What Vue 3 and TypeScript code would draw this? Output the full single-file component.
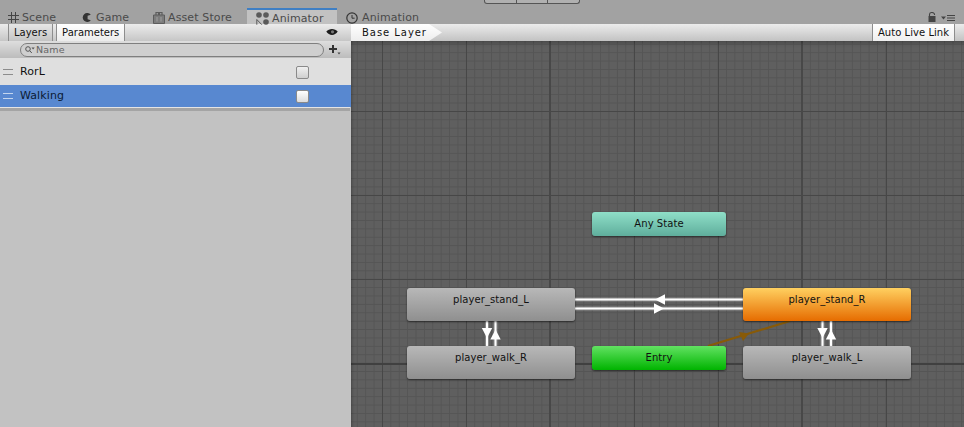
<script setup lang="ts">
interface GraphNode { label: string; x: number; y: number; w: number; h: number; kind: string }
const nodes: GraphNode[] = [
  { label: 'Any State', x: 241, y: 171, w: 134, h: 24, kind: 'teal' },
  { label: 'player_stand_L', x: 56, y: 247, w: 168, h: 33, kind: 'gray' },
  { label: 'player_stand_R', x: 392, y: 247, w: 168, h: 33, kind: 'orange' },
  { label: 'player_walk_R', x: 56, y: 305, w: 168, h: 33, kind: 'gray' },
  { label: 'Entry', x: 241, y: 305, w: 134, h: 24, kind: 'green' },
  { label: 'player_walk_L', x: 392, y: 305, w: 168, h: 33, kind: 'gray' },
]
const params = [
  { name: 'RorL', selected: false },
  { name: 'Walking', selected: true },
]
function nodeStyle(n: GraphNode) {
  return { left: n.x + 'px', top: n.y + 'px', width: n.w + 'px', height: n.h + 'px' }
}
</script>

<template>
  <div class="app">
    <div class="topstrip">
      <div class="playgroup"><span></span><span></span><span></span></div>
    </div>
    <div class="tabs">
      <div class="tab t-scene">
        <svg width="11" height="11" viewBox="0 0 11 11"><path d="M3.5 0v11M7.5 0v11M0 3.5h11M0 7.5h11" stroke="#444" stroke-width="1" fill="none"/></svg>
        <span>Scene</span>
      </div>
      <div class="tab t-game">
        <svg width="9" height="9" viewBox="0 0 9 9"><path d="M8.8 1.8A4.5 4.5 0 1 0 8.8 7.2L5.6 6.2V2.8Z" fill="#333"/></svg>
        <span>Game</span>
      </div>
      <div class="tab t-store">
        <svg width="12" height="13" viewBox="0 0 12 13"><path d="M0.5 4h11v8.5h-11Z" fill="#7c7c7c" stroke="#5c5c5c"/><path d="M3 4V1.5h2.5V4M6.5 4V1.5H9V4" fill="none" stroke="#5c5c5c" stroke-width="1.2"/><path d="M4 6v4.5M8 6v4.5" stroke="#a0a0a0"/></svg>
        <span>Asset Store</span>
      </div>
      <div class="tab active">
        <svg width="13" height="13" viewBox="0 0 13 13"><circle cx="3" cy="3" r="2.8" fill="#5a5a5a"/><circle cx="10" cy="3" r="2.8" fill="#5a5a5a"/><circle cx="10" cy="10" r="2.8" fill="#5a5a5a"/><path d="M0.8 7.5v5.2M0.8 7.5l5 5.2" stroke="#5a5a5a" fill="none"/></svg>
        <span>Animator</span>
      </div>
      <div class="tab t-anim">
        <svg width="12" height="12" viewBox="0 0 12 12"><circle cx="6" cy="6" r="5.2" fill="none" stroke="#333" stroke-width="1.2"/><path d="M6 3v3.2h2.6" fill="none" stroke="#333"/></svg>
        <span>Animation</span>
      </div>
      <div class="tab-tools">
        <svg width="8" height="10" viewBox="0 0 8 10"><path d="M0.5 4h7V10h-7Z" fill="#444"/><path d="M1.5 4V2.5a2.5 2 0 0 1 5 0V3" fill="none" stroke="#444" stroke-width="1.1"/></svg>
        <svg class="menu" width="14" height="6" viewBox="0 0 14 6"><path d="M0 1.5h5L2.5 4.5Z" fill="#444"/><path d="M6 .5h8M6 3h8M6 5.5h8" stroke="#444" fill="none"/></svg>
      </div>
    </div>

    <div class="body">
      <aside class="panel">
        <div class="toolbar">
          <div class="pill">Layers</div>
          <div class="pill on">Parameters</div>
          <svg class="eye" width="12" height="8" viewBox="0 0 12 8"><path d="M0.3 3.5C3 0 9 0 11.7 3.5 9 8 3 8 0.3 3.5Z" fill="#1c1c1c"/><circle cx="6.5" cy="3.8" r="1.6" fill="#777"/></svg>
        </div>
        <div class="searchbar">
          <div class="search">
            <svg width="10" height="8" viewBox="0 0 10 8"><circle cx="3" cy="3" r="2.3" fill="none" stroke="#555"/><path d="M4.8 4.8L6.8 7" stroke="#555"/><path d="M6.5 1.5h3.2L8.1 3.5Z" fill="#555"/></svg>
            <span>Name</span>
          </div>
          <svg class="plus" width="12" height="11" viewBox="0 0 12 11"><path d="M0 4h8v2H0ZM3 1h2v8H3Z" fill="#333"/><path d="M8.5 8.5h3L10 10.5Z" fill="#444"/></svg>
        </div>
        <div class="list">
          <div v-for="p in params" :key="p.name" class="row" :class="{ selected: p.selected }">
            <span class="handle"></span>
            <span class="pname">{{ p.name }}</span>
            <span class="check"></span>
          </div>
        </div>
        <div class="listend"></div>
      </aside>

      <main class="graph">
        <div class="crumbbar">
          <div class="crumb">Base Layer</div>
          <div class="livelink">Auto Live Link</div>
        </div>
        <div class="canvas">
          <svg class="edges" width="613" height="386" viewBox="0 0 613 386">
            <g stroke="#fff" stroke-opacity=".25" stroke-width="4" fill="none">
              <path d="M224 258.5H392M224 267.5H392"/>
              <path d="M136 280V305M144.5 280V305M471.5 280V305M480 280V305"/>
            </g>
            <g stroke="#fff" stroke-width="2" fill="none">
              <path d="M224 258.5H392M224 267.5H392"/>
              <path d="M136 280V305M144.5 280V305M471.5 280V305M480 280V305"/>
            </g>
            <g fill="#fff">
              <path d="M304 258.5l10-5.2v10.4Z"/>
              <path d="M313 267.5l-10-5.2v10.4Z"/>
              <path d="M136 297l-5.2-10h10.4Z"/>
              <path d="M144.5 288.5l-5.2 10h10.4Z"/>
              <path d="M471.5 297l-5.2-10h10.4Z"/>
              <path d="M480 288.5l-5.2 10h10.4Z"/>
            </g>
            <path d="M357 305L439 280" stroke="#885a08" stroke-width="2.2" fill="none"/>
            <path d="M398 292.5L388 291L392 300Z" fill="#885a08"/>
          </svg>
          <div v-for="n in nodes" :key="n.label" class="node" :class="n.kind" :style="nodeStyle(n)">
            <span>{{ n.label }}</span>
          </div>
        </div>
      </main>
    </div>
  </div>
</template>

<style scoped>
.app {
  width: 964px;
  height: 427px;
  overflow: hidden;
  display: flex;
  flex-direction: column;
  background: #a2a2a2;
  font-family: "DejaVu Sans", sans-serif;
  color: #111;
}
.topstrip { height: 4px; padding-left: 484px; flex: none; }
.playgroup {
  width: 96px;
  height: 4px;
  box-sizing: border-box;
  display: flex;
  border: 1px solid #555;
  border-top: 0;
  border-radius: 0 0 3px 3px;
  background: #b0b0b0;
}
.playgroup span { flex: 1; border-right: 1px solid #555; }
.playgroup span:last-child { border-right: 0; }

.tabs {
  height: 20px;
  flex: none;
  display: flex;
  align-items: flex-end;
  font-size: 11px;
  letter-spacing: 0.12px;
  color: #4a4a4a;
}
.tab {
  height: 15px;
  display: flex;
  align-items: center;
  gap: 3px;
  white-space: nowrap;
}
.tab span { position: relative; top: 1px; }
.tab svg { position: relative; top: 1px; }
.t-scene { margin-left: 8px; width: 74px; }
.t-game { width: 71px; gap: 5px; }
.t-store { width: 94px; gap: 3px; }
.active {
  width: 90px;
  box-sizing: border-box;
  padding-left: 9px;
  background: #c2c2c2;
  border-top: 2px solid #3f7fc4;
  height: 16px;
}
.t-anim { margin-left: 9px; gap: 4px; width: 582px; }
.tab-tools { height: 15px; display: flex; align-items: center; gap: 5px; }
.menu { margin-top: 3px; }

.body { flex: 1; display: flex; min-height: 0; }
.panel {
  width: 351px;
  flex: none;
  display: flex;
  flex-direction: column;
  background: #c2c2c2;
  font-size: 10px;
}
.toolbar {
  height: 17px;
  flex: none;
  display: flex;
  align-items: stretch;
  padding-left: 8px;
  gap: 3px;
  background: linear-gradient(#ececec, #c6c6c6);
}
.pill {
  padding: 0 5px;
  display: flex;
  align-items: center;
  border-left: 1px solid #8d8d8d;
  border-right: 1px solid #8d8d8d;
  background: linear-gradient(#e6e6e6, #c4c4c4);
}
.pill.on { background: linear-gradient(#fff, #ebebeb); }
.eye { margin: 4px 13px 0 auto; }
.searchbar {
  height: 17px;
  flex: none;
  box-sizing: border-box;
  display: flex;
  align-items: center;
  padding: 0 10px 0 20px;
  background: linear-gradient(#dedede, #bcbcbc);
}
.search {
  flex: 1;
  height: 14px;
  box-sizing: border-box;
  border: 1px solid #7f7f7f;
  border-radius: 7px;
  background: #cfcfcf;
  display: flex;
  align-items: center;
  gap: 1px;
  padding-left: 4px;
  color: #666;
  letter-spacing: 0.2px;
  font-size: 9.5px;
}
.plus { margin-left: 5px; flex: none; }
.list { background: #dfdfdf; padding-top: 2px; flex: none; }
.row {
  height: 24px;
  display: flex;
  align-items: center;
  font-size: 11px;
  letter-spacing: 0.1px;
  padding-left: 3px;
  margin-bottom: 1px;
}
.row.selected { height: 22px; background: #5888d0; margin-bottom: 0; }
.handle {
  width: 10px;
  height: 4px;
  border-top: 1px solid #8c8c8c;
  border-bottom: 1px solid #8c8c8c;
  margin-right: 7px;
}
.selected .handle { border-color: #c4d6ee; }
.pname { width: 276px; padding-bottom: 2px; }
.selected .pname { color: #0b1a33; }
.check {
  width: 11px;
  height: 11px;
  border: 1px solid #8a8a8a;
  border-radius: 2px;
  background: linear-gradient(#f0f0f0, #cfcfcf);
}
.selected .check { background: linear-gradient(#fff, #dcdcdc); }
.listend {
  height: 4px;
  flex: none;
  box-sizing: border-box;
  background: #a4a4a4;
  border-top: 1px solid #e4e4e4;
  margin-right: 1px;
}

.graph { flex: 1; display: flex; flex-direction: column; min-width: 0; }
.crumbbar {
  height: 17px;
  flex: none;
  display: flex;
  justify-content: space-between;
  background: linear-gradient(#ececec, #c2c2c2);
  font-size: 10px;
}
.crumb {
  width: 91px;
  padding-left: 11px;
  box-sizing: border-box;
  display: flex;
  align-items: center;
  letter-spacing: 0.95px;
  background: linear-gradient(#fff, #ededed);
  clip-path: polygon(0 0, 78px 0, 91px 50%, 78px 100%, 0 100%);
}
.livelink {
  width: 83px;
  margin-right: 9px;
  box-sizing: border-box;
  display: flex;
  align-items: center;
  justify-content: center;
  background: linear-gradient(#fff, #efefef);
  border-left: 1px solid #8d8d8d;
  border-right: 1px solid #8d8d8d;
  letter-spacing: 0.05px;
  white-space: nowrap;
}
.canvas {
  flex: 1;
  position: relative;
  background-color: #5f5f5f;
  background-image:
    linear-gradient(90deg, #484848 2px, transparent 2px),
    linear-gradient(#404040 2px, transparent 2px),
    linear-gradient(90deg, #474747 1px, transparent 1px),
    linear-gradient(#474747 1px, transparent 1px),
    linear-gradient(90deg, #555555 1px, transparent 1px),
    linear-gradient(#555555 1px, transparent 1px);
  background-size: 252px 252px, 336px 336px, 84px 84px, 84px 84px, 8.4px 8.4px, 8.4px 8.4px;
  background-position: 198px 0, 0 -14px, 31px 0, 0 70px, 5.8px 0, 0 2.8px;
  box-shadow: inset 0 4px 4px -2px rgba(0, 0, 0, .25), inset 3px 0 3px -2px rgba(0, 0, 0, .2);
}
.edges { position: absolute; left: 0; top: 0; }
.node {
  position: absolute;
  box-sizing: border-box;
  border-radius: 3px;
  display: flex;
  justify-content: center;
  padding-top: 5px;
  font-size: 10px;
  letter-spacing: 0.06px;
  line-height: 13px;
  box-shadow: 0 1px 2px rgba(0, 0, 0, .55);
}
.gray { background: linear-gradient(#b8b8b8, #8f8f8f); }
.orange { background: linear-gradient(#ffd060, #e66c00); }
.green { background: linear-gradient(#62e262, #00b400); }
.teal { background: linear-gradient(#8fdfc8, #5fae9c); }
</style>

<style>
html, body { margin: 0; background: #a2a2a2; }
</style>
